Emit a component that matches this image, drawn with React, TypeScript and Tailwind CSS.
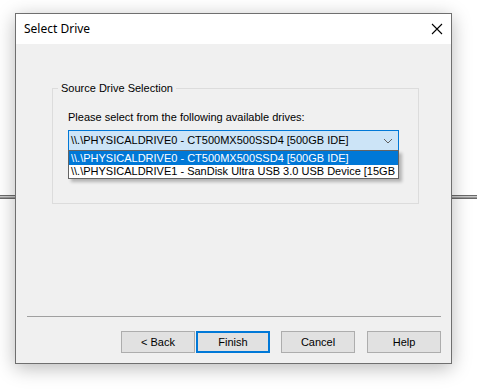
import React from "react";

const ui = { fontFamily: '"Liberation Sans", Arial, sans-serif' };
const title = { fontFamily: '"Noto Sans", "Open Sans", sans-serif' };

function Btn({ label, primary }: { label: string; primary?: boolean }) {
  return (
    <div
      className={
        "w-[74px] h-[22px] flex items-center justify-center bg-[#e1e1e1] text-[11px] text-black " +
        (primary ? "border-2 border-[#0078d7]" : "border border-[#adadad]")
      }
    >
      {label}
    </div>
  );
}

export default function App() {
  return (
    <div className="relative w-[477px] h-[389px] bg-white overflow-hidden" style={ui}>
      {/* backdrop lines behind the dialog */}
      <div className="absolute left-0 right-0 top-[195px] h-[4px] flex flex-col">
        <div className="h-px bg-[#6a6a6a]" />
        <div className="h-px bg-[#c8c8c8]" />
        <div className="h-px bg-[#9a9a9a]" />
        <div className="h-px bg-[#6a6a6a]" />
      </div>

      <div className="relative ml-[15px] mt-[13px] w-[437px] h-[351px] border border-[#6f6f6f] bg-[#f0f0f0] flex flex-col shadow-[0_4px_18px_rgba(0,0,0,0.28)]">
        {/* title bar */}
        <div className="h-[30px] bg-white flex items-center justify-between pl-[8px] pr-[8px]">
          <span className="text-[12px] text-black" style={title}>
            Select Drive
          </span>
          <svg width="12" height="12" viewBox="0 0 12 12">
            <path d="M1 1L11 11M11 1L1 11" stroke="#000" strokeWidth="1.1" fill="none" />
          </svg>
        </div>

        {/* body */}
        <div className="flex-1 flex flex-col">
          {/* group box */}
          <div className="relative ml-[36px] mt-[44px] w-[367px] h-[116px] border border-[#dcdcdc]">
            <span className="absolute left-[5px] top-[-8px] px-[3px] bg-[#f0f0f0] text-[11px] leading-[14px] text-black">
              Source Drive Selection
            </span>
            <div className="ml-[15px] mt-[21px] text-[11px] leading-[14px] text-black">
              Please select from the following available drives:
            </div>
            <div className="relative ml-[15px] mt-[6px] w-[331px] h-[21px] border border-[#0078d7] bg-[#cce4f7] flex items-center justify-between pl-[2px] pr-[5px]">
              <span className="text-[11px] text-black whitespace-nowrap">
                \\.\PHYSICALDRIVE0 - CT500MX500SSD4 [500GB IDE]
              </span>
              <svg width="10" height="6" viewBox="0 0 10 6">
                <path d="M1 1L5 5L9 1" stroke="#606060" strokeWidth="1" fill="none" />
              </svg>
              {/* dropdown list */}
              <div className="absolute left-[-1px] top-[19px] w-[331px] h-[29px] border border-[#646464] bg-white overflow-hidden shadow-[3px_3px_3px_rgba(0,0,0,0.25)] flex flex-col z-10">
                <div className="h-[14px] bg-[#0078d7] text-white text-[11px] leading-[14px] pl-[2px] whitespace-nowrap">
                  \\.\PHYSICALDRIVE0 - CT500MX500SSD4 [500GB IDE]
                </div>
                <div className="h-[13px] text-black text-[11px] leading-[13px] pl-[2px] whitespace-nowrap">
                  \\.\PHYSICALDRIVE1 - SanDisk Ultra USB 3.0 USB Device [15GB USB]
                </div>
              </div>
            </div>
          </div>

          {/* separator */}
          <div className="ml-[11px] mt-[112px] w-[414px] h-px bg-[#a0a0a0]" />

          {/* buttons */}
          <div className="flex ml-[105px] mt-[14px]">
            <Btn label="< Back" />
            <div className="ml-[1px]">
              <Btn label="Finish" primary />
            </div>
            <div className="ml-[11px]">
              <Btn label="Cancel" />
            </div>
            <div className="ml-[12px]">
              <Btn label="Help" />
            </div>
          </div>
        </div>
      </div>
    </div>
  );
}
